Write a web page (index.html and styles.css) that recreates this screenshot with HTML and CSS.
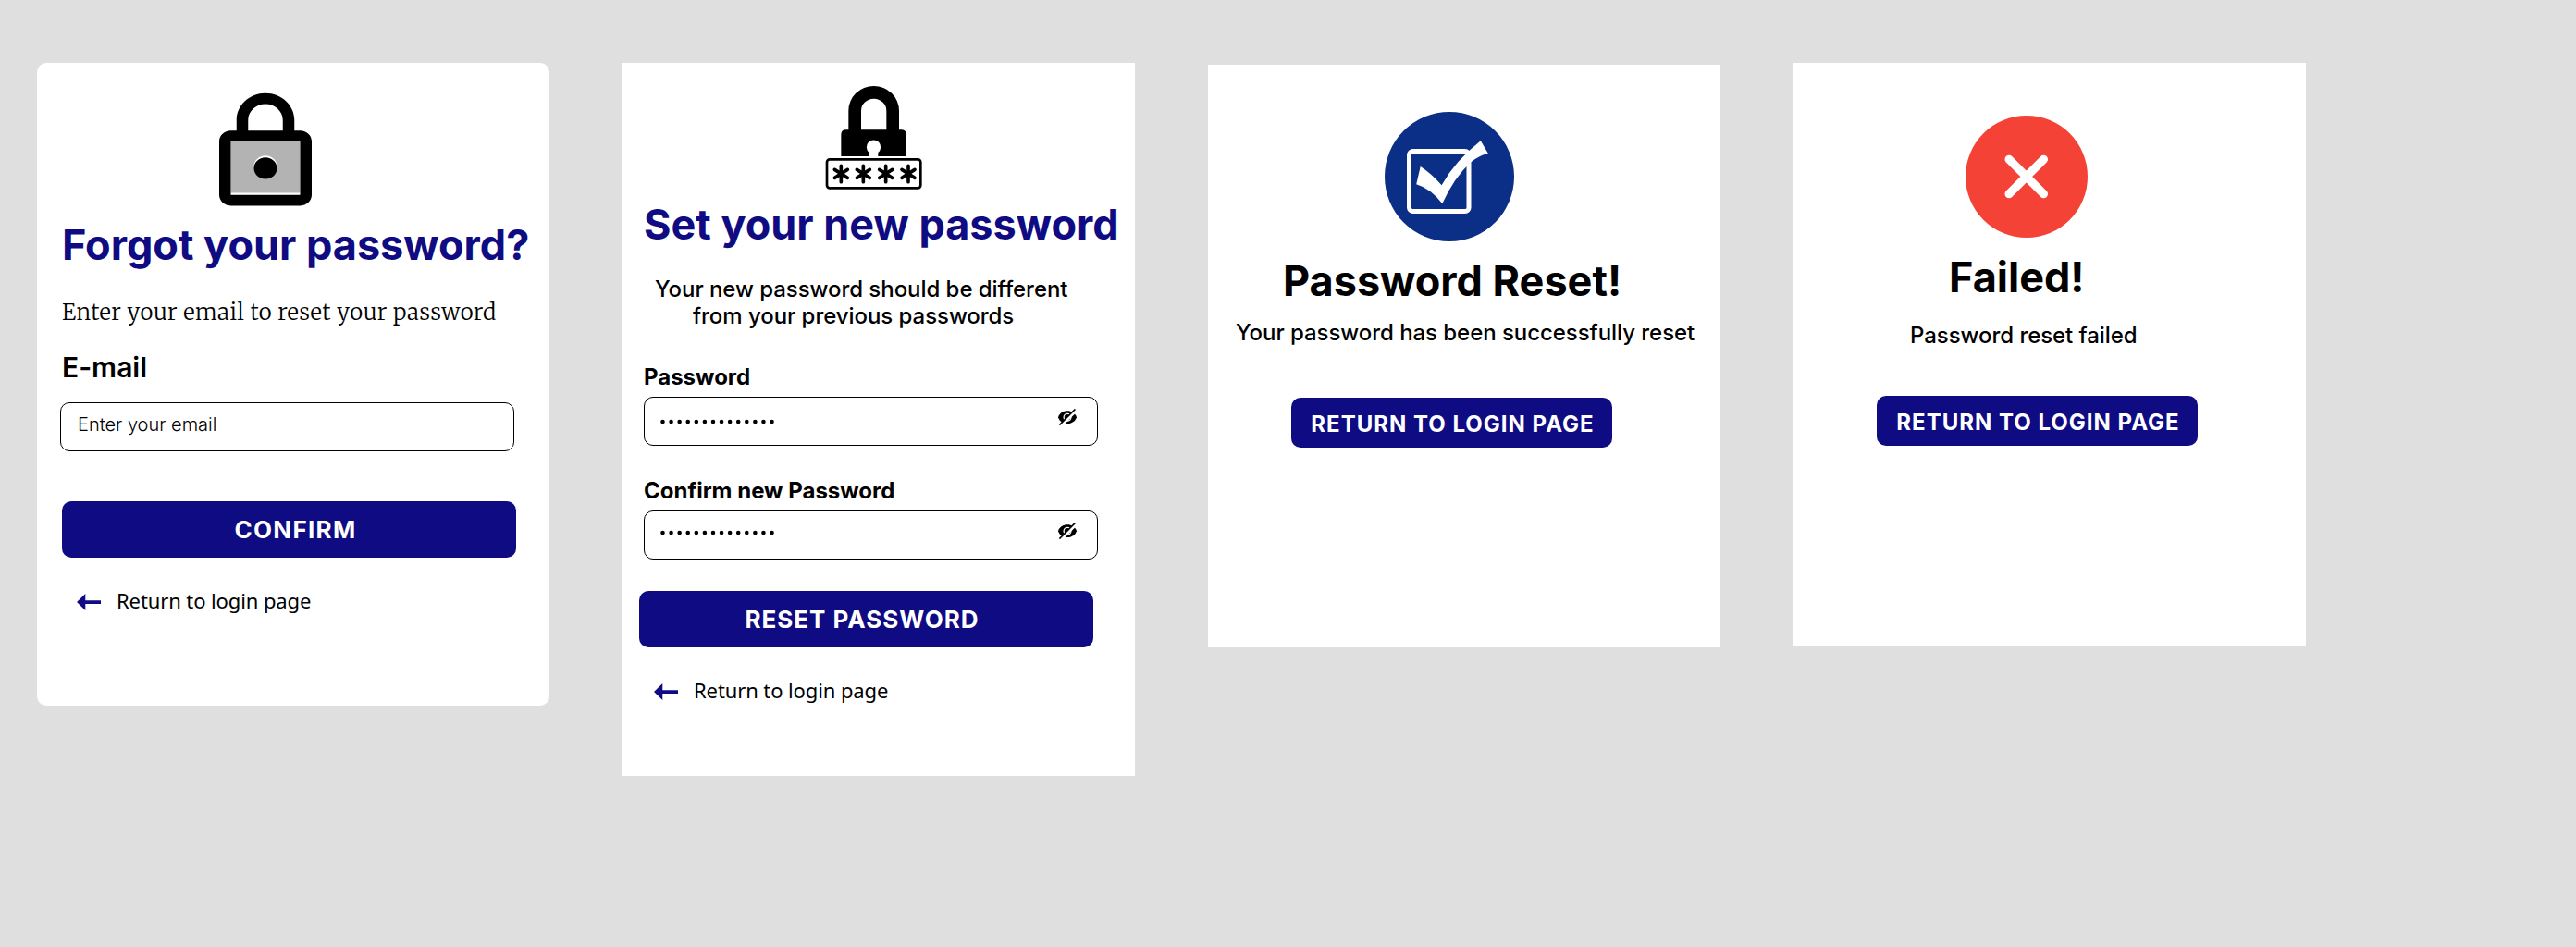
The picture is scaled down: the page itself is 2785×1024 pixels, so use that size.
FILE: index.html
```html
<!DOCTYPE html>
<html lang="en">
<head>
<meta charset="utf-8">
<title>Password reset</title>
<link rel="stylesheet" href="styles.css">
</head>
<body>
<svg class="defs" width="0" height="0">
  <symbol id="arrow" viewBox="0 0 26 18"><path d="M0 9 9.300 0V7.200H26V11H9.300V18Z" fill="#0f0b82"/></symbol>
  <symbol id="dots" viewBox="0 0 124 6"><path d="M2.500 3H122" fill="none" stroke="#000" stroke-width="4.600" stroke-linecap="round" stroke-dasharray="0 9.080"/></symbol>
  <symbol id="eye-off" viewBox="0 0 20 18">
    <path d="M0 9.200C1.500 4.500 5.500 2.200 10 2.200S18.500 4.500 20 9.200C18.500 13.800 14.500 16 10 16S1.500 13.800 0 9.200Z" fill="#000"/>
    <circle cx="10" cy="9.200" r="3.900" fill="none" stroke="#fff" stroke-width="1.300"/>
    <path d="M2.800 18.500 19.800 1" stroke="#fff" stroke-width="3.600"/>
    <path d="M1.400 17.600 18.400 .4" stroke="#000" stroke-width="1.600"/>
  </symbol>
</svg>
<main class="board">
  <section class="card card-forgot">
    <svg class="lock" viewBox="0 0 24 24" preserveAspectRatio="none">
      <path d="M6 19.600h12V9.500H6zM12 12.650c1.100 0 2 .9 2 2s-.9 2-2 2-2-.9-2-2 .9-2 2-2z" fill="#b3b3b3"/>
      <path d="M18 8h-1V6c0-2.760-2.240-5-5-5S7 3.240 7 6v2H6c-1.100 0-2 .9-2 2v10c0 1.100.9 2 2 2h12c1.100 0 2-.9 2-2V10c0-1.100-.9-2-2-2zM9 6c0-1.660 1.340-3 3-3s3 1.340 3 3v2H9V6zm9 14H6V10h12v10zm-6-3c1.100 0 2-.9 2-2s-.9-2-2-2-2 .9-2 2 .9 2 2 2z"/>
    </svg>
    <h1 class="title">Forgot your password?</h1>
    <p class="lead">Enter your email to reset your password</p>
    <label class="email-label">E-mail</label>
    <div class="field"><span class="placeholder">Enter your email</span></div>
    <button class="btn btn-wide">CONFIRM</button>
    <a class="back"><svg class="arrow"><use href="#arrow"/></svg><span>Return to login page</span></a>
  </section>

  <section class="card card-new">
    <svg class="lock-code" viewBox="0 0 390 390">
      <path d="M112 170V104a82 80 0 0 1 164 0V166H285Q300 168 300 182V252H208V240A23 23 0 1 0 179 240V252H88V182Q88 166 104 166H112ZM153 166H235V104a41 39 0 0 0-82 0Z" fill-rule="evenodd"/>
      <rect x="42" y="262" width="304" height="93" rx="9" fill="none" stroke="#000" stroke-width="8"/>
      <g stroke="#000" stroke-width="11" stroke-linecap="round">
        <path d="M88 283V335M67 295 109 322M109 295 67 322"/>
        <path d="M160 283V335M139 295 181 322M181 295 139 322"/>
        <path d="M233 283V335M212 295 254 322M254 295 212 322"/>
        <path d="M306 283V335M285 295 327 322M327 295 285 322"/>
      </g>
    </svg>
    <h1 class="title">Set your new password</h1>
    <p class="text"><span>Your new password should be different</span><span class="line2">from your previous passwords</span></p>
    <label class="label">Password</label>
    <div class="field"><svg class="dots"><use href="#dots"/></svg><svg class="eye"><use href="#eye-off"/></svg></div>
    <label class="label second">Confirm new Password</label>
    <div class="field"><svg class="dots dots-high"><use href="#dots"/></svg><svg class="eye"><use href="#eye-off"/></svg></div>
    <button class="btn btn-wide">RESET PASSWORD</button>
    <a class="back"><svg class="arrow"><use href="#arrow"/></svg><span>Return to login page</span></a>
  </section>

  <section class="card card-success">
    <svg class="status" viewBox="0 0 140 140">
      <circle cx="70" cy="70" r="70" fill="#0b2f87"/>
      <rect x="26.500" y="42.500" width="64.500" height="65" rx="4" fill="none" stroke="#fff" stroke-width="5"/>
      <path d="M103.800 31.300 111.900 45Q102 47 93 54.500 75 71 62.300 99.300 50 83 34.200 78.300L38.700 59Q51 67 61.600 79.300 76 53 103.800 31.300Z" fill="#fff"/>
    </svg>
    <h1 class="title">Password Reset!</h1>
    <p class="text">Your password has been successfully reset</p>
    <button class="btn btn-small">RETURN TO LOGIN PAGE</button>
  </section>

  <section class="card card-failed">
    <svg class="status" viewBox="0 0 132 132">
      <circle cx="66" cy="66" r="66" fill="#f44336"/>
      <path d="M47 47.200 84.500 84.800M84.500 47.200 47 84.800" stroke="#fff" stroke-width="9" stroke-linecap="round"/>
    </svg>
    <h1 class="title">Failed!</h1>
    <p class="text">Password reset failed</p>
    <button class="btn btn-small">RETURN TO LOGIN PAGE</button>
  </section>
</main>
</body>
</html>
```
FILE: styles.css
```css
* { box-sizing: border-box; }

body {
  margin: 0;
  min-height: 1024px;
  background: #dfdfdf;
  color: #000;
  font-family: Inter, "Liberation Sans", sans-serif;
}

.defs { position: absolute; }

.board {
  display: flex;
  align-items: flex-start;
  gap: 79px;
  padding: 68px 0 0 40px;
}

.card {
  display: flex;
  flex-direction: column;
  align-items: flex-start;
  flex: none;
  width: 554px;
  background: #fff;
  white-space: nowrap;
}

.card svg { display: block; flex: none; }

.title {
  margin: 0;
  font-size: 45px;
  line-height: 53px;
  font-weight: 700;
}

.text {
  display: flex;
  flex-direction: column;
  margin: 0;
  font-size: 24px;
  line-height: 29px;
  font-weight: 500;
  letter-spacing: -0.05px;
}

.label {
  margin: 37px 0 7px 23px;
  font-size: 24px;
  line-height: 29px;
  font-weight: 700;
}

.label.second { margin-top: 34px; }

.field {
  display: flex;
  align-items: flex-start;
  justify-content: space-between;
  width: 491px;
  height: 53px;
  margin-left: 23px;
  border: 1px solid #000;
  border-radius: 10px;
}

.placeholder {
  margin: 10px 0 0 18px;
  font-size: 20px;
  line-height: 26px;
  font-weight: 300;
}

.field .dots {
  width: 124px;
  height: 6px;
  margin: 23px 0 0 17px;
}

.field .dots-high { margin-top: 20px; }

.eye {
  width: 20px;
  height: 18px;
  margin: 12px 22px 0 0;
}

.btn {
  display: flex;
  align-items: center;
  justify-content: center;
  border: 0;
  border-radius: 10px;
  background: #0f0b82;
  color: #fff;
  font-family: inherit;
  font-weight: 700;
}

.btn-wide {
  width: 491px;
  height: 61px;
  padding: 0;
  font-size: 26px;
  letter-spacing: 1px;
}

.btn-small {
  width: 347px;
  height: 54px;
  padding: 2px 0 0 2px;
  font-size: 24px;
  letter-spacing: 1px;
}

.back {
  display: flex;
  height: 28px;
  margin-top: 32px;
  font-family: "Noto Sans", sans-serif;
  font-size: 22px;
  line-height: 28px;
  letter-spacing: -0.1px;
}

.arrow {
  width: 26px;
  height: 18px;
  margin: 7px 17px 0 0;
}

.card-forgot { height: 695px; border-radius: 10px; }
.card-forgot .title { margin: 4px 0 0 27px; color: #0f0b82; }
.card-forgot .field { margin: 20px 0 54px 25px; }
.card-forgot .btn { margin-left: 27px; padding-left: 14px; letter-spacing: 1.300px; }
.card-forgot .back { margin-left: 43px; }

.lock { width: 150px; height: 139px; margin: 27px 0 0 172px; }

.lead {
  margin: 31px 0 26px 27px;
  font-family: Merriweather, "Noto Serif", "Liberation Serif", serif;
  font-size: 24px;
  line-height: 32px;
  font-weight: 300;
  letter-spacing: 0.52px;
}

.email-label {
  margin-left: 27px;
  font-size: 30px;
  line-height: 35px;
  font-weight: 600;
}

.card-new { height: 771px; }
.card-new .title { margin: 1px 0 29px 23px; color: #0f0b82; }
.card-new .text { margin-left: 35px; }
.card-new .line2 { margin-left: 41px; }
.card-new .btn { margin: 34px 0 0 18px; padding-right: 9px; }
.card-new .back { margin-left: 34px; }

.lock-code { width: 130px; height: 130px; margin: 17px 0 0 207px; }

.card-success { height: 630px; margin-top: 2px; }
.card-success .status { width: 140px; height: 140px; margin: 51px 0 16px 191px; }
.card-success .title { margin-left: 81px; }
.card-success .text { margin: 15px 0 56px 30px; }
.card-success .btn { margin-left: 90px; }

.card-failed { height: 630px; }
.card-failed .status { width: 132px; height: 132px; margin: 57px 0 16px 186px; }
.card-failed .title { margin-left: 168px; }
.card-failed .text { margin: 22px 0 51px 126px; }
.card-failed .btn { margin-left: 90px; }
```
